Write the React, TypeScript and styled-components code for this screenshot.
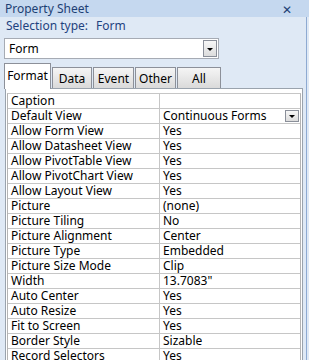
import React from "react";
import styled, { createGlobalStyle } from "styled-components";

const GlobalStyle = createGlobalStyle`
    body {
        margin: 0;
        font-family: "Noto Sans", "Liberation Sans", Arial, sans-serif;
    }
`;

const Panel = styled.div`
    width: 309px;
    height: 360px;
    overflow: hidden;
    background: #dfe9f5;
    position: relative;
    box-sizing: border-box;
    font-size: 11px;
`;

const EdgeLine = styled.div`
    position: absolute;
    top: 17px;
    right: 2px;
    bottom: 0;
    width: 1px;
    background: #8eaad2;
`;

const TitleBar = styled.div`
    height: 17px;
    background: #c5d8ef;
    display: flex;
    align-items: center;
    justify-content: space-between;
    padding: 0 17px 0 5px;
    color: #1d3f74;
    font-size: 12px;
`;

const Close = styled.span`
    font-size: 12px;
    color: #1d3f74;
    margin-top: 1px;
`;

const SelectionLine = styled.div`
    height: 17px;
    display: flex;
    align-items: center;
    padding-left: 6px;
    color: #1f4380;
    font-size: 12px;
    gap: 8px;
`;

const Combo = styled.div`
    margin: 4px 0 0 4px;
    width: 215px;
    height: 21px;
    box-sizing: border-box;
    border: 1px solid #a6abb4;
    background: #fff;
    display: flex;
    align-items: center;
    justify-content: space-between;
    padding: 0 1px 0 4px;
    font-size: 12px;
    color: #000;
`;

const DropButton = styled.div<{ small?: boolean }>`
    width: 14px;
    height: ${(p) => (p.small ? 12 : 17)}px;
    box-sizing: border-box;
    border: 1px solid #8a8f99;
    background: linear-gradient(#f7f7f7, #dcdcdc);
    display: flex;
    align-items: center;
    justify-content: center;
`;

const Arrow = styled.div`
    width: 0;
    height: 0;
    border-left: 3px solid transparent;
    border-right: 3px solid transparent;
    border-top: 3px solid #000;
    margin-top: 1px;
`;

const Tabs = styled.div`
    margin-top: 5px;
    display: flex;
    align-items: flex-end;
    height: 25px;
    padding-left: 4px;
`;

const Tab = styled.div<{ active?: boolean; w: number }>`
    box-sizing: border-box;
    height: ${(p) => (p.active ? 26 : 22)}px;
    width: ${(p) => p.w}px;
    margin-right: 1px;
    border: 1px solid #8c9099;
    border-bottom: ${(p) => (p.active ? "none" : "1px solid #8c9099")};
    background: ${(p) => (p.active ? "#fff" : "linear-gradient(#f5f5f5, #dadada)")};
    display: flex;
    align-items: center;
    justify-content: center;
    font-size: 12px;
    color: #000;
    position: relative;
    z-index: ${(p) => (p.active ? 2 : 1)};
    padding-bottom: ${(p) => (p.active ? 3 : 0)}px;
`;

const Frame = styled.div`
    margin: -1px 0 0 5px;
    width: 298px;
    height: 280px;
    box-sizing: border-box;
    border: 1px solid #9aa3ad;
    background: #fff;
    padding: 4px 1px 0 1px;
    position: relative;
    z-index: 1;
`;

const Grid = styled.div`
    display: grid;
    grid-template-columns: 151px 1fr;
    border-left: 1px solid #b4b4b4;
    border-right: 1px solid #b4b4b4;
    border-top: 1px solid #c6c6c6;
`;

const Cell = styled.div<{ right?: boolean }>`
    height: 15px;
    box-sizing: border-box;
    border-bottom: 1px solid #c6c6c6;
    border-left: ${(p) => (p.right ? "1px solid #c6c6c6" : "none")};
    padding-left: 3px;
    padding-right: 1px;
    font-size: 12px;
    line-height: 14px;
    color: #000;
    white-space: nowrap;
    display: flex;
    align-items: center;
    justify-content: space-between;
`;

const rows: [string, string][] = [
    ["Caption", ""],
    ["Default View", "Continuous Forms"],
    ["Allow Form View", "Yes"],
    ["Allow Datasheet View", "Yes"],
    ["Allow PivotTable View", "Yes"],
    ["Allow PivotChart View", "Yes"],
    ["Allow Layout View", "Yes"],
    ["Picture", "(none)"],
    ["Picture Tiling", "No"],
    ["Picture Alignment", "Center"],
    ["Picture Type", "Embedded"],
    ["Picture Size Mode", "Clip"],
    ["Width", "13.7083\""],
    ["Auto Center", "Yes"],
    ["Auto Resize", "Yes"],
    ["Fit to Screen", "Yes"],
    ["Border Style", "Sizable"],
    ["Record Selectors", "Yes"],
];

const tabs = [
    { label: "Format", w: 47, active: true },
    { label: "Data", w: 40 },
    { label: "Event", w: 41 },
    { label: "Other", w: 41 },
    { label: "All", w: 44 },
];

export default function App() {
    return (
        <>
            <GlobalStyle />
            <Panel>
                <EdgeLine />
                <TitleBar>
                    <span>Property Sheet</span>
                    <Close>✕</Close>
                </TitleBar>
                <SelectionLine>
                    <span>Selection type:</span>
                    <span>Form</span>
                </SelectionLine>
                <Combo>
                    <span>Form</span>
                    <DropButton>
                        <Arrow />
                    </DropButton>
                </Combo>
                <Tabs>
                    {tabs.map((t) => (
                        <Tab key={t.label} active={t.active} w={t.w}>
                            {t.label}
                        </Tab>
                    ))}
                </Tabs>
                <Frame>
                    <Grid>
                        {rows.map(([k, v]) => (
                            <React.Fragment key={k}>
                                <Cell>{k}</Cell>
                                <Cell right>
                                    <span>{v}</span>
                                    {k === "Default View" && (
                                        <DropButton small>
                                            <Arrow />
                                        </DropButton>
                                    )}
                                </Cell>
                            </React.Fragment>
                        ))}
                    </Grid>
                </Frame>
            </Panel>
        </>
    );
}
